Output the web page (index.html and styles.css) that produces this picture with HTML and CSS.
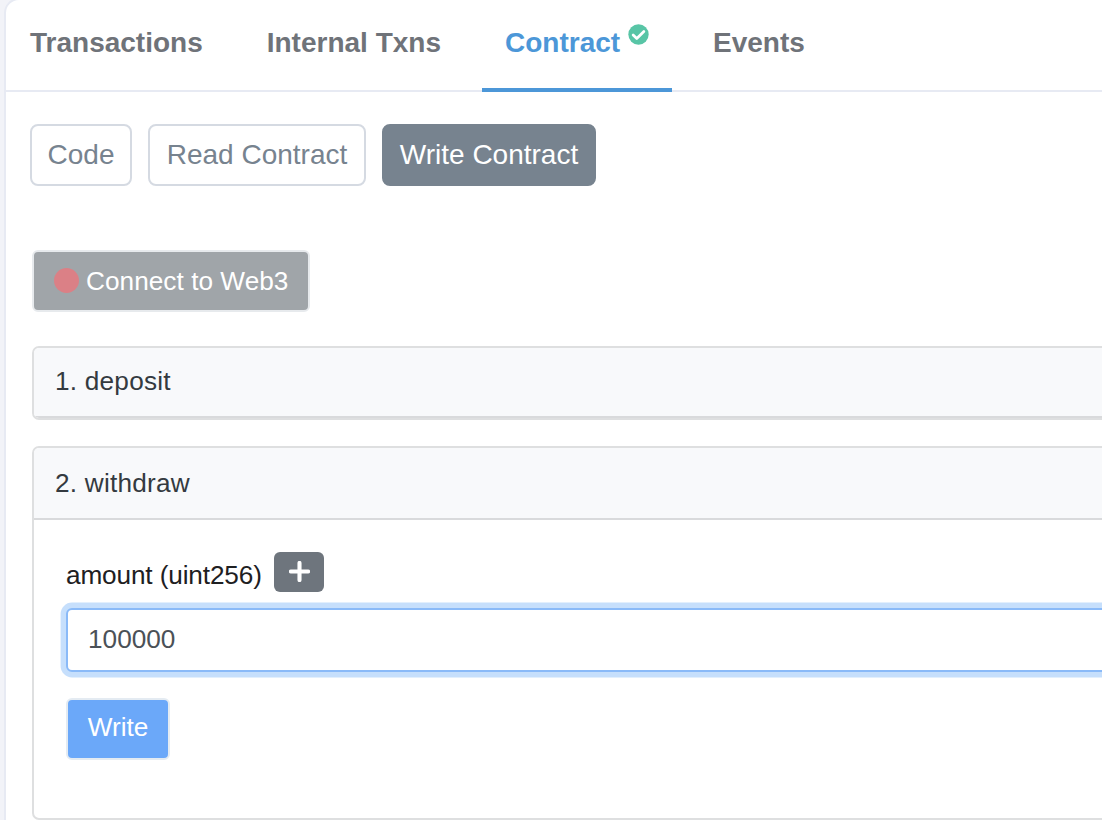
FILE: index.html
```html
<!DOCTYPE html>
<html lang="en">
<head>
<meta charset="utf-8">
<title>Write Contract</title>
<link rel="stylesheet" href="styles.css">
</head>
<body>
<main class="card">
  <nav class="tabs">
    <a class="tab">Transactions</a>
    <a class="tab">Internal Txns</a>
    <a class="tab tab-active">Contract
      <svg class="verified" viewBox="0 0 512 512"><circle cx="256" cy="256" r="248" fill="#58c5a6"/><path d="M125 267L214 353L387 181" fill="none" stroke="#fff" stroke-width="66" stroke-linecap="round" stroke-linejoin="round"/></svg>
    </a>
    <a class="tab">Events</a>
  </nav>
  <div class="modes">
    <button class="mode mode-code">Code</button>
    <button class="mode mode-read">Read Contract</button>
    <button class="mode mode-write">Write Contract</button>
  </div>
  <div class="content">
    <button class="connect"><span class="dot"></span><span class="connect-text">Connect to Web3</span></button>
    <section class="method method-closed">
      <div class="method-head head-first">1. deposit</div>
    </section>
    <section class="method method-open">
      <div class="method-head">2. withdraw</div>
      <div class="method-body">
        <div class="field-label">
          <label for="amount">amount (uint256)</label>
          <button class="add" aria-label="Add zeros"><svg viewBox="0 0 20 20"><path d="M10 1.8V18.2M1.8 10H18.2" stroke="#fff" stroke-width="3.9" stroke-linecap="round"/></svg></button>
        </div>
        <input class="amount" id="amount" type="text" value="100000">
        <button class="write">Write</button>
      </div>
    </section>
  </div>
</main>
</body>
</html>
```
FILE: styles.css
```css
* { box-sizing: border-box; }
body {
  margin: 0;
  height: 820px;
  overflow: hidden;
  background: #f2f3f8;
  font-family: "Liberation Sans", Arial, sans-serif;
  font-size: 26.2px;
  color: #1e2022;
}
button, input { font: inherit; margin: 0; }
button { white-space: nowrap; padding: 0; }
.card {
  height: 860px;
  width: 1140px;
  margin: -2px 0 0 4px;
  background: #fff;
  border: 2px solid #e7eaf3;
  border-radius: 15px;
}
.tabs {
  display: flex;
  gap: 18px;
  height: 92px;
  padding-left: 1px;
  border-bottom: 2px solid #e7eaf3;
}
.tab {
  height: 92px;
  padding: 25px 23px 0;
  font-size: 28px;
  font-weight: bold;
  line-height: 36px;
  color: #6f7379;
  white-space: nowrap;
}
.tab-active {
  display: flex;
  gap: 8px;
  width: 190px;
  color: #4c97d8;
  border-bottom: 4px solid #4c97d8;
}
.verified { width: 21px; height: 21px; flex: none; margin-top: -1px; }
.modes {
  display: flex;
  gap: 16px;
  padding: 32px 0 0 24px;
}
.mode {
  height: 62px;
  font-size: 28px;
  line-height: 58px;
  border: 2px solid #d5dae2;
  border-radius: 8px;
  background: #fff;
  color: #77838f;
}
.mode-code { width: 102px; }
.mode-read { width: 218px; }
.mode-write {
  width: 214px;
  color: #fff;
  background: #77838f;
  border-color: #77838f;
}
.content { padding: 64px 0 0 26px; }
.connect {
  display: flex;
  align-items: center;
  width: 278px;
  height: 62px;
  padding: 0 0 2px 20px;
  border: 2px solid #e7eaed;
  border-radius: 6px;
  background: #a0a5a9;
  color: #fff;
}
.connect-text { padding-top: 2px; letter-spacing: 0.04px; }
.dot {
  width: 25px;
  height: 25px;
  margin-right: 7px;
  border-radius: 50%;
  background: #db8086;
}
.method {
  border: 2px solid #dedfe0;
  border-radius: 7px;
  overflow: hidden;
}
.method-closed { height: 74px; margin-top: 34px; }
.method-open { height: 374px; margin-top: 26px; }
.method-head {
  height: 72px;
  padding: 0 21px;
  line-height: 70px;
  letter-spacing: 0.22px;
  background: #f8f9fb;
  border-bottom: 2px solid #d9dadc;
  color: #343a40;
}
.head-first { line-height: 66px; height: 70px; }
.method-body { padding: 32px 0 0 32px; }
.field-label { display: flex; height: 40px; gap: 12px; }
.field-label label { line-height: 46px; width: 196px; white-space: nowrap; letter-spacing: -0.14px; }
.add {
  display: flex;
  justify-content: center;
  width: 50px;
  height: 40px;
  padding-top: 9px;
  border: 0;
  border-radius: 6px;
  background: #6e757d;
}
.add svg { width: 21px; height: 21px; }
.amount {
  display: block;
  width: 1080px;
  height: 64px;
  margin-top: 16px;
  padding: 0 20px 2px;
  border: 2px solid #8abaf8;
  border-radius: 6px;
  outline: 0;
  box-shadow: 0 0 0 5.4px #c6dffc;
  color: #4b5157;
}
.write {
  display: block;
  width: 104px;
  height: 62px;
  margin-top: 26px;
  padding-bottom: 4px;
  border: 2px solid #e4ebf2;
  border-radius: 6px;
  background: #6ba8f9;
  color: #fff;
}
```
